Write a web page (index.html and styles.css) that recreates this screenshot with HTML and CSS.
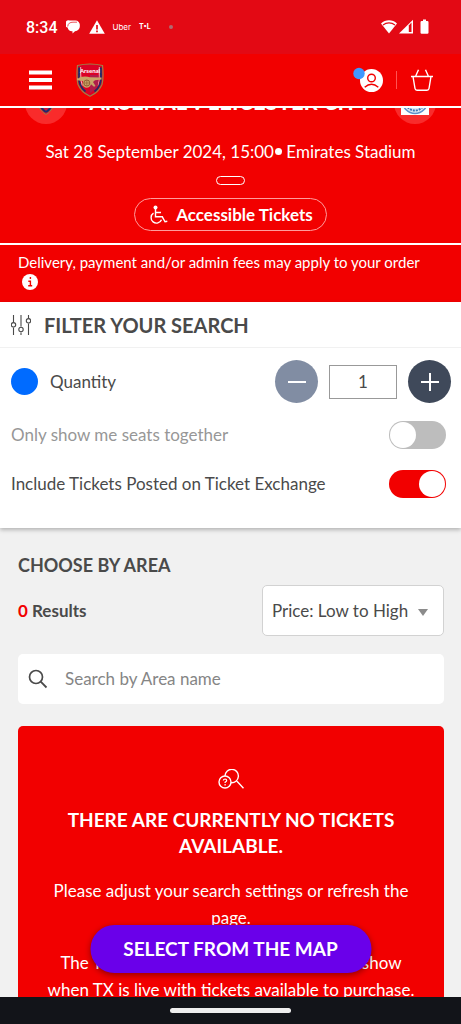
FILE: index.html
```html
<!DOCTYPE html>
<html lang="en">
<head>
<meta charset="utf-8">
<meta name="viewport" content="width=device-width, initial-scale=1">
<title>Arsenal v Leicester City</title>
<link rel="stylesheet" href="styles.css">
</head>
<body>
<div class="statusbar">
  <span class="clock">8:34</span>
  <svg class="st-chat" viewBox="0 0 14 14" width="14" height="14"><path fill="#fff" d="M4 .5h5A3.500 3.500 0 0 1 9 .5a4.500 4.500 0 0 1 4.800 5.200A5 5 0 0 1 9 11.200L6.500 13.600V11.200H6A4.500 4.500 0 0 1 1.600 7.500 3.600 3.600 0 0 1 4 .5z"/><path d="M1.700 6.500C1.900 3.500 4 2.200 7 2.200h4" fill="none" stroke="#e30914" stroke-width=".7"/></svg>
  <svg class="st-warn" viewBox="0 0 16 14" width="16" height="14"><path fill="#fff" d="M8 .3 15.800 13.700H.2z"/><path d="M8 5v4.500M8 10.600v1.600" stroke="#e30914" stroke-width="1.700"/></svg>
  <span class="st-uber">Uber</span>
  <span class="st-tl">T•L</span>
  <span class="st-dot"></span>
  <svg class="st-right" viewBox="0 0 50 16" width="50" height="16"><path fill="#fff" d="M1 4.600C5.500.2 12.500.2 17 4.600L9 14.500z"/><path d="M3 6C6.500 3.200 11.500 3.200 15 6" fill="none" stroke="#e30914" stroke-width="1.100"/><path fill="#fff" d="M19 14.500 33 .8v13.700z"/><path fill="#e30914" d="M28.800 6.400 31.500 3.600v9.300h-2.700z"/><path fill="#fff" d="M40.500 3.200q0-1.200 1.200-1.200h1.300V.5h3V2h1.300q1.200 0 1.200 1.200v10.600q0 1-1.200 1h-5.600q-1.200 0-1.200-1z"/></svg>
</div>

<header class="header">
  <button class="icon-btn" aria-label="Menu"><svg viewBox="0 0 24 20" width="24" height="20"><path d="M1 2.500h23M1 10h23M1 17.500h23" stroke="#fff" stroke-width="3.800"/></svg></button>
  <a class="logo" href="#" aria-label="Arsenal home">
    <svg viewBox="0 0 28 34" width="28" height="34"><path fill="#db0026" stroke="#9c824a" stroke-width="1.200" d="M1.500 2.500Q14-.5 26.500 2.500 27.800 14 26 21.500 23 29 14 33.300 5 29 2 21.500.2 14 1.500 2.500z"/><path fill="none" stroke="#17306e" stroke-width="1.700" d="M3 11q-.2 7 1.200 10.500Q6 26 9.500 28.500M25 11q.2 7-1.200 10.500Q22 26 18.500 28.500"/><path fill="#17306e" d="M2.200 4.500h2v7h-2zM23.800 4.500h2v7h-2z"/><path fill="none" stroke="#fff" stroke-width=".7" d="M4.700 4v7q0 8 1.600 11.500M23.300 4v7q0 8-1.600 11.500"/><path fill="#af1c4a" d="M14 12h8.500q.5 8-1.500 12-2.500 3.700-7 6.200z"/><path fill="#c9a467" d="M1 15.200h2l1-1.200q6-1 10 .2l11.500.4v2l-6.500.6-2 1.800 2.500 4-1.500.8-3-2.600q-1 3.400-4.300 3.600-3.600 0-4.200-3.800l.4-3-5.900-.8z"/><circle cx="10.800" cy="20" r="3" fill="none" stroke="#8d592f" stroke-width=".9"/><path d="M10.800 17v6M7.800 20h6" stroke="#8d592f" stroke-width=".6"/><text class="crest-name" x="14" y="9.800" text-anchor="middle">Arsenal</text></svg>
  </a>
  <button class="icon-btn account" aria-label="Account"><svg viewBox="0 0 32 26" width="32" height="26"><circle cx="19.500" cy="13.500" r="11.500" fill="#fff"/><circle cx="19.500" cy="11" r="3.800" fill="none" stroke="#f20000" stroke-width="1.400"/><path d="M12.700 20.300q6.800-6.200 13.600 0" fill="none" stroke="#f20000" stroke-width="1.400"/><circle cx="7" cy="6.500" r="5.700" fill="#3f98ff"/></svg></button>
  <span class="divider"></span>
  <button class="icon-btn basket" aria-label="Basket"><svg viewBox="0 0 24 24" width="24" height="24"><path fill="none" stroke="#fff" stroke-width="1.400" stroke-linejoin="round" d="M1 8.500h22M3 8.500l2 12q.3 1.700 2 1.700h10q1.700 0 2-1.700l2-12M5.500 8.500l3-6.800M18.500 8.500l-3-6.800"/></svg></button>
</header>

<main class="page">
  <section class="hero">
    <div class="match">
      <span class="team"><svg viewBox="0 0 20 24" width="20" height="24"><path fill="#d4123a" stroke="#9c824a" d="M1 0h18v12q-3 8-9 11.500Q4 20 1 12z"/><path d="M3 10q1 7 7 11M17 10q-1 7-7 11" fill="none" stroke="#17306e" stroke-width="2"/></svg></span>
      <h1 class="match-name">ARSENAL v LEICESTER CITY</h1>
      <span class="team"><svg viewBox="0 4 28 24" width="28" height="24"><path fill="#fff" d="M0 0h28v28H0z"/><circle cx="14" cy="14" r="12.500" fill="#dbe9f5" stroke="#5f91c9" stroke-width="1.500"/><circle cx="14" cy="14" r="9.500" fill="none" stroke="#3e78b8" stroke-width="2" stroke-dasharray="2 1"/><circle cx="14" cy="14" r="6.500" fill="#78a8d5"/></svg></span>
    </div>
    <p class="when">Sat 28 September 2024, 15:00<span class="bullet"></span> Emirates Stadium</p>
    <span class="empty-pill"></span>
    <button class="accessible"><svg viewBox="0 0 20 20" width="20" height="20"><circle cx="7.500" cy="2.500" r="2" fill="#fff"/><path fill="none" stroke="#fff" stroke-width="1.400" d="M7.500 4v7.800h6.800l2.700 5 2.300-.6M7.500 7.500h5.500M5.500 8.200a5.400 5.400 0 1 0 8 6.500"/></svg>Accessible Tickets</button>
  </section>

  <p class="fees">Delivery, payment and/or admin fees may apply to your order
    <button class="info" aria-label="More about fees"><svg viewBox="0 0 16 16" width="16" height="16"><circle cx="8" cy="8" r="8" fill="#fff"/><path d="M8.400 3v2M6.300 7.200h2.100v4M6.200 11.700h4" fill="none" stroke="#f20000" stroke-width="1.400"/></svg></button>
  </p>

  <form class="filter">
    <h2 class="filter-title"><svg viewBox="0 0 20 20" width="20" height="20"><g fill="none" stroke="#4a4a4a" stroke-width="1.100"><path d="M2.500 0v7M2.500 12.500V20M10 0v11.500M10 17.500V20M17.500 0v3M17.500 8.500V20"/><circle cx="2.500" cy="9.800" r="2.200"/><circle cx="10" cy="14.500" r="2.200"/><circle cx="17.500" cy="5.800" r="2.200"/></g></svg>FILTER YOUR SEARCH</h2>
    <div class="filter-body">
      <div class="quantity">
        <span class="qty-dot"></span>
        <label class="qty-label" for="qty">Quantity</label>
        <button type="button" class="step minus" aria-label="Fewer"><svg viewBox="0 0 18 18" width="18" height="18"><path d="M0 9h18" stroke="#fff" stroke-width="2"/></svg></button>
        <input class="qty-input" id="qty" type="text" inputmode="numeric" value="1">
        <button type="button" class="step plus" aria-label="More"><svg viewBox="0 0 18 18" width="18" height="18"><path d="M0 9h18M9 0v18" stroke="#fff" stroke-width="2"/></svg></button>
      </div>
      <div class="option muted"><label for="together">Only show me seats together</label><input class="switch" id="together" type="checkbox"></div>
      <div class="option"><label for="exchange">Include Tickets Posted on Ticket Exchange</label><input class="switch" id="exchange" type="checkbox" checked></div>
    </div>
  </form>

  <section class="areas">
    <h2 class="areas-title">CHOOSE BY AREA</h2>
    <div class="results-row">
      <p class="results"><span class="count">0</span> Results</p>
      <div class="sort">
        <select class="sort-select" aria-label="Sort by"><option>Price: Low to High</option><option>Price: High to Low</option></select>
        <svg class="caret" viewBox="0 0 10 7" width="10" height="7"><path fill="#8b8b8b" d="M0 0h10L5 7z"/></svg>
      </div>
    </div>
    <div class="search">
      <svg viewBox="0 0 20 20" width="20" height="20"><circle cx="8" cy="8" r="6.500" fill="none" stroke="#4a4a4a" stroke-width="1.700"/><path d="m12.700 12.700 5.800 5.800" stroke="#4a4a4a" stroke-width="1.800"/></svg>
      <input class="search-input" type="search" placeholder="Search by Area name" aria-label="Search by Area name">
    </div>
    <article class="notice">
      <svg viewBox="0 0 26 20" width="26" height="20"><g fill="none" stroke="#fff" stroke-width="1.400"><circle cx="7" cy="13" r="6"/><path d="M7 7a6.700 6.700 0 1 1 6 6.700M19 12.200l6.500 7"/><path stroke-width="1.200" d="M5.300 11.500q.2-1.500 1.800-1.500 1.600.1 1.600 1.500 0 .8-1.600 1.700v.8M7.100 15v1.400"/></g></svg>
      <h3 class="notice-title">THERE ARE CURRENTLY NO TICKETS AVAILABLE.</h3>
      <p class="notice-text">Please adjust your search settings or refresh the page.</p>
      <p class="notice-text">The Ticket Exchange selections will only show when TX is live with tickets available to purchase.</p>
    </article>
  </section>
  <button class="map-btn">SELECT FROM THE MAP</button>
</main>
<div class="navbar"><span class="handle"></span></div>
</body>
</html>
```

FILE: styles.css
```css
* { box-sizing: border-box; }
body {
  margin: 0;
  height: 100vh;
  display: flex;
  flex-direction: column;
  overflow: hidden;
  background: #f1f1f1;
  color: #4a4a4a;
  font: 17px/26px Lato, "Open Sans", sans-serif;
}
h1, h2, h3, p { margin: 0; }
svg { display: block; flex: none; }
button, input, select { font: inherit; color: inherit; }
button { border: 0; padding: 0; background: none; cursor: pointer; }

.statusbar {
  flex: none;
  height: 54px;
  padding: 0 31px 0 26px;
  display: flex;
  align-items: center;
  background: #e30914;
  color: #fff;
  font-family: Inter, Roboto, sans-serif;
}
.clock { font: 500 16px Roboto, sans-serif; }
.st-chat { margin-left: 8px; }
.st-warn { margin-left: 9px; }
.st-uber { margin-left: 8px; font-size: 8px; }
.st-tl { margin-left: 8px; font-size: 7px; font-weight: 700; }
.st-dot { margin-left: 18px; width: 4px; height: 4px; border-radius: 50%; background: #b06a70; }
.st-right { margin-left: auto; }

.header {
  flex: none;
  height: 54px;
  padding: 0 27px 0 28px;
  display: flex;
  align-items: center;
  background: #f20000;
  border-bottom: 2px solid #fff;
}
.header .icon-btn { display: flex; }
.logo { margin-left: 24px; }
.crest-name { fill: #fff; font: 700 6px Lato, sans-serif; }
.account { margin-left: auto; }
.divider { width: 1px; height: 18px; margin: 0 13px 0 12px; background: #ff5252; }

.page {
  position: relative;
  flex: 1;
  min-height: 0;
  overflow: hidden;
}
.hero {
  display: flex;
  flex-direction: column;
  align-items: center;
  padding-bottom: 12px;
  background: #f20000;
  border-bottom: 2px solid #fff;
  color: #fff;
}
.match {
  align-self: stretch;
  display: flex;
  justify-content: space-between;
  align-items: flex-end;
  height: 16px;
  padding: 0 25px;
  overflow: hidden;
}
.match-name { padding-bottom: 9px; font-size: 22px; line-height: 26px; white-space: nowrap; }
.team {
  width: 42px;
  height: 42px;
  border-radius: 50%;
  background: #f92b2b;
  display: flex;
  align-items: center;
  justify-content: center;
  flex: none;
}
.when { margin-top: 15px; }
.bullet {
  display: inline-block;
  width: 7px;
  height: 7px;
  margin-left: 1px;
  border-radius: 50%;
  background: #fff;
  vertical-align: 3px;
}
.empty-pill { width: 29px; height: 9px; margin-top: 11px; border: 1px solid #fff; border-radius: 5px; }
.accessible {
  display: flex;
  align-items: center;
  gap: 8px;
  height: 33px;
  margin-top: 13px;
  padding: 0 13px;
  border: 1px solid #ff9c9c;
  border-radius: 17px;
  font-weight: 700;
}
.fees {
  padding: 7px 18px 12px;
  background: #f20000;
  color: #fff;
  font-size: 15px;
  line-height: 20px;
}
.info { display: block; margin: 2px 4px 0; }

.filter { background: #fff; box-shadow: 0 2px 4px rgba(0, 0, 0, .25); position: relative; }
.filter-title {
  display: flex;
  align-items: center;
  gap: 13px;
  height: 46px;
  padding: 0 11px;
  border-bottom: 1px solid #f1f1f1;
  font-size: 20px;
}
.filter-body { padding: 12px 10px 28px 11px; }
.quantity { display: flex; align-items: center; }
.qty-dot { width: 27px; height: 27px; border-radius: 50%; background: #006bff; }
.qty-label { margin-left: 12px; }
.step {
  display: flex;
  align-items: center;
  justify-content: center;
  width: 43px;
  height: 43px;
  border-radius: 50%;
}
.minus { margin-left: auto; background: #818da3; }
.plus { background: #3f495a; }
.qty-input {
  width: 68px;
  height: 34px;
  margin: 0 11px;
  border: 1px solid #999;
  background: #fff;
  text-align: center;
}
.option {
  display: flex;
  align-items: center;
  justify-content: space-between;
  height: 33px;
  margin-top: 15px;
  padding-right: 5px;
}
.option + .option { margin-top: 16px; }
.muted { color: #979797; }
.switch {
  appearance: none;
  flex: none;
  display: flex;
  width: 57px;
  height: 28px;
  margin: 0;
  padding: 1px;
  border-radius: 14px;
  background: #bdbdbd;
}
.switch::before { content: ""; width: 26px; height: 26px; border-radius: 50%; background: #fff; }
.switch:checked { background: #f20000; justify-content: flex-end; }

.areas { padding: 24px 17px 0 18px; }
.areas-title { font-size: 18px; line-height: 26px; }
.results-row { display: flex; align-items: center; justify-content: space-between; margin-top: 7px; }
.results { font-weight: 700; }
.count { color: #f20000; }
.sort { position: relative; width: 182px; }
.sort-select {
  appearance: none;
  width: 100%;
  height: 51px;
  padding: 0 9px;
  border: 1px solid #d2d2d2;
  border-radius: 5px;
  background: #fff;
}
.caret { position: absolute; right: 16px; top: 24px; pointer-events: none; }
.search {
  display: flex;
  align-items: center;
  gap: 17px;
  height: 50px;
  margin-top: 18px;
  padding: 0 10px;
  border-radius: 5px;
  background: #fff;
}
.search-input { flex: 1; min-width: 0; border: 0; padding: 0; outline: 0; background: none; appearance: none; }
.search-input::placeholder { color: #858585; opacity: 1; }
.notice {
  display: flex;
  flex-direction: column;
  align-items: center;
  margin-top: 22px;
  padding: 43px 24px 30px;
  border-radius: 5px;
  background: #f20000;
  color: #fff;
  text-align: center;
}
.notice-title { margin-top: 18px; font-size: 19px; line-height: 26px; }
.notice-text { margin-top: 18px; line-height: 27px; }
.map-btn {
  position: absolute;
  left: 50%;
  bottom: 24px;
  transform: translateX(-50%);
  width: 281px;
  height: 48px;
  border-radius: 24px;
  background: #6a00ea;
  box-shadow: 0 2px 6px rgba(0, 0, 0, .4);
  color: #fff;
  font-size: 19px;
  font-weight: 700;
  white-space: nowrap;
}
.navbar {
  flex: none;
  height: 27px;
  display: flex;
  align-items: center;
  justify-content: center;
  background: #121419;
}
.handle { width: 121px; height: 5px; border-radius: 3px; background: #eee; }
```
